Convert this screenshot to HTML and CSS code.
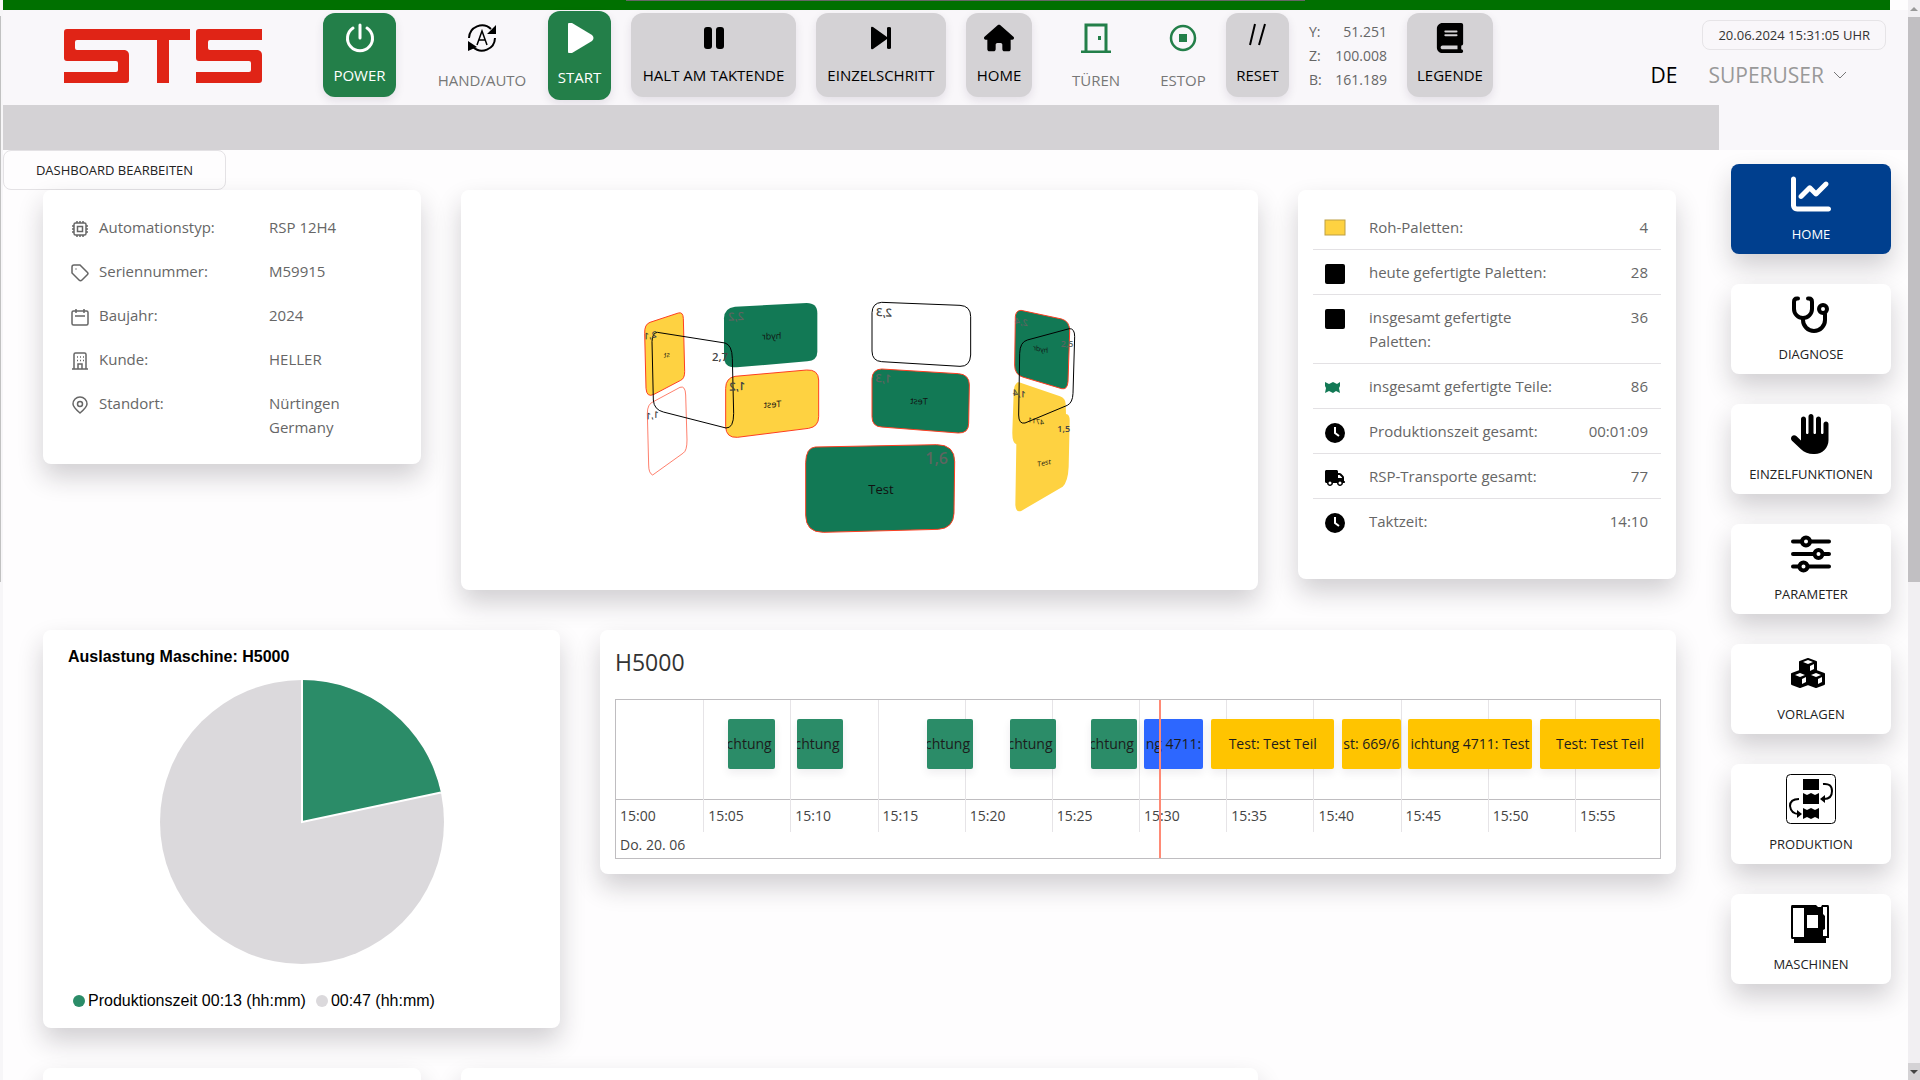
FILE: index.html
```html
<!DOCTYPE html>
<html lang="de">
<head>
<meta charset="utf-8">
<title>STS Dashboard</title>
<link rel="stylesheet" href="styles.css">
</head>
<body>
<div class="edge" aria-hidden="true"></div>
<div class="app">
  <div class="status-bar"><span class="status-line"></span></div>
  <header class="header">
    <svg class="logo" viewBox="0 0 198 54" role="img" aria-label="STS"><g fill="#e02416"><path d="M3 0H126V11H105V54H93V11H13Q11 11 11 13V19Q11 21 13 21H61Q65 22 65 26V51Q65 54 62 54H0V43H52Q54 43 54 41V34Q54 32 52 32H3Q0 32 0 29V3Q0 0 3 0Z"/><path d="M135 0H198V11H146Q144 11 144 13V19Q144 21 146 21H194Q198 22 198 26V51Q198 54 195 54H132V43H185Q187 43 187 41V34Q187 32 185 32H135Q132 32 132 29V3Q132 0 135 0Z"/></g></svg>
    <div class="toolbar">
      <button class="tool tool-on"><svg viewBox="0 0 30 30"><g fill="none" stroke="#fff" stroke-width="3" stroke-linecap="round"><path d="M15 2V15"/><path d="M8 5A12.500 12.500 0 1 0 22 5"/></g></svg><span>POWER</span></button>
      <button class="tool tool-plain"><svg viewBox="0 0 30 30"><g fill="none" stroke="#000" stroke-width="2"><path d="M2 15A13 13 0 0 1 24 6"/><path d="M28 15A13 13 0 0 1 6 24"/><path d="M10 22L15 8L20 22M12 17H18" stroke-width="1.500"/></g><path d="M29 2V11H20ZM1 28V18L10 24Z"/></svg><span>HAND/AUTO</span></button>
      <button class="tool tool-on tool-start"><svg viewBox="0 0 30 30"><path d="M3 2Q3-2 7 0L27 12Q30 15 27 18L7 30Q3 32 3 28Z" fill="#fff"/></svg><span>START</span></button>
      <button class="tool"><svg viewBox="0 0 30 30"><rect x="5" y="4" width="8" height="22" rx="3"/><rect x="17" y="4" width="8" height="22" rx="3"/></svg><span>HALT AM TAKTENDE</span></button>
      <button class="tool"><svg viewBox="0 0 30 30"><path d="M5 5Q5 3 7 4L21 14V5Q21 4 23 4T25 5V25Q25 26 23 26T21 25V16L7 26Q5 27 5 25Z"/></svg><span>EINZELSCHRITT</span></button>
      <button class="tool"><svg viewBox="0 -32 576 576"><path d="M575.8 255.500c0 18-15 32.100-32 32.100h-32l.7 160.200c0 2.700-.2 5.400-.5 8.100V472c0 22.100-17.900 40-40 40H456c-1.100 0-2.200 0-3.300-.1c-1.400 .1-2.800 .1-4.200 .1H416 392c-22.100 0-40-17.900-40-40V448 384c0-17.700-14.300-32-32-32H256c-17.700 0-32 14.300-32 32v64 24c0 22.100-17.900 40-40 40H160 128.100c-1.500 0-3-.1-4.500-.2c-1.200 .1-2.400 .2-3.600 .2H104c-22.100 0-40-17.900-40-40V360c0-.9 0-1.900 .1-2.800V287.600H32c-18 0-32-14-32-32.100c0-9 3-17 10-24L266.400 8c7-7 15-8 22-8s15 2 21 7L564.800 231.500c8 7 12 15 11 24z"/></svg><span>HOME</span></button>
      <button class="tool tool-plain"><svg viewBox="0 0 30 30"><g fill="none" stroke="#237f49" stroke-width="3"><path d="M5 28V2H25V28M0 29H30"/></g><rect x="17" y="13" width="3" height="4" fill="#237f49"/></svg><span>TÜREN</span></button>
      <button class="tool tool-plain"><svg viewBox="0 0 30 30"><circle cx="15" cy="15" r="12" fill="none" stroke="#237f49" stroke-width="2.500"/><rect x="11" y="11" width="8" height="8" fill="#237f49"/></svg><span>ESTOP</span></button>
      <button class="tool"><svg viewBox="0 0 30 30"><path d="M12 1L7 22M22 1L16 22" stroke="#000" stroke-width="2"/></svg><span>RESET</span></button>
      <dl class="axes"><dt>Y:</dt><dd>51.251</dd><dt>Z:</dt><dd>100.008</dd><dt>B:</dt><dd>161.189</dd></dl>
      <button class="tool"><svg viewBox="-32 0 512 512"><path d="M96 0C43 0 0 43 0 96V416c0 53 43 96 96 96H384h32c17.700 0 32-14.300 32-32s-14.300-32-32-32V384c17.700 0 32-14.300 32-32V32c0-17.700-14.300-32-32-32H384 96zm0 384H352v64H96c-17.700 0-32-14.300-32-32s14.300-32 32-32zm32-240c0-8.800 7.200-16 16-16H336c8.800 0 16 7.200 16 16s-7.200 16-16 16H144c-8.800 0-16-7.200-16-16zm16 48H336c8.800 0 16 7.200 16 16s-7.200 16-16 16H144c-8.800 0-16-7.200-16-16s7.200-16 16-16z"/></svg><span>LEGENDE</span></button>
    </div>
    <div class="session">
      <time class="clock">20.06.2024 15:31:05 UHR</time>
      <div class="account">
        <button class="lang">DE</button>
        <button class="user">SUPERUSER <svg viewBox="0 0 14 10" width="14" height="10"><path d="M1 2L7 8L13 2" fill="none" stroke="#777"/></svg></button>
      </div>
    </div>
  </header>
  <div class="message-bar"></div>

  <div class="body">
    <main class="dashboard">
      <button class="edit">DASHBOARD BEARBEITEN</button>
      <div class="row row-three">
        <section class="card info">
          <dl>
            <dt><svg viewBox="0 0 18 18"><rect x="3" y="3" width="12" height="12" rx="1.500"/><rect x="6.500" y="6.500" width="5" height="5"/><path d="M6 3V1M9 3V1M12 3V1M6 17V15M9 17V15M12 17V15M3 6H1M3 9H1M3 12H1M17 6H15M17 9H15M17 12H15"/></svg>Automationstyp:</dt><dd>RSP 12H4</dd>
            <dt><svg viewBox="0 0 18 18"><path d="M1 3Q1 1 3 1H9L16.500 8.500Q17.500 9.500 16.500 10.500L11 16Q9.500 17.500 8 16L1 9Z"/><path d="M5 4.500V5.500"/></svg>Seriennummer:</dt><dd>M59915</dd>
            <dt><svg viewBox="0 0 18 18"><rect x="1" y="3" width="16" height="14" rx="1.500"/><path d="M5 1V5M13 1V5M4 8H14"/></svg>Baujahr:</dt><dd>2024</dd>
            <dt><svg viewBox="0 0 18 18"><path d="M3 17V2.500Q3 1 4.500 1H13.500Q15 1 15 2.500V17M1 17H17M7 17V12H11V17M6 5H7M9 5H10M12 5H13M6 8.500H7M9 8.500H10M12 8.500H13"/></svg>Kunde:</dt><dd>HELLER</dd>
            <dt><svg viewBox="0 0 18 18"><path d="M9 17Q2 11 2 8A7 7 0 0 1 16 8Q16 11 9 17Z"/><circle cx="9" cy="8" r="2.500"/></svg>Standort:</dt><dd>Nürtingen<br>Germany</dd>
          </dl>
        </section>

        <section class="card storage">
          <svg class="carousel" viewBox="0 0 1440 810" role="img" aria-label="Palettenspeicher">
            <g stroke-width="3">
              <path d="M90 127L175 99Q189 95 190 115L194 275Q194 296 182 301L102 343Q80 354 78 325L74 160Q73 133 90 127Z" fill="#fed241" stroke="#fd3f22"/>
              <path d="M100 365L180 322Q196 316 197 345L201 480Q201 512 190 519L98 585Q86 580 86 555L82 400Q82 372 100 365Z" fill="none" stroke="#fd3f22" stroke-width="2"/>
              <path d="M345 80L560 69Q592 69 592 100V215Q592 241 562 244L350 262Q312 264 312 230V115Q312 84 345 80Z" fill="#127955"/>
              <path d="M345 289L560 270Q595 268 596 300V410Q596 440 566 445L352 472Q318 474 317 440V325Q317 294 345 289Z" fill="#fed241" stroke="#fd3f22"/>
              <path d="M785 67L1020 76Q1052 78 1052 110V225Q1050 260 1020 259L785 245Q756 243 756 213V98Q757 69 785 67Z" fill="none" stroke="#000"/>
              <path d="M785 267L1015 281Q1048 283 1048 315L1046 430Q1046 460 1015 459L785 441Q756 440 756 410V296Q757 268 785 267Z" fill="#127955" stroke="#fd3f22"/>
              <path d="M1203 91L1325 117Q1350 124 1349 155L1344 305Q1342 330 1325 326L1208 291Q1184 284 1184 255L1186 110Q1187 92 1203 91Z" fill="#127955" stroke="#fd3f22"/>
              <path d="M1197 307L1320 349Q1337 355 1337 372L1338 402Q1350 403 1349 425L1346 560Q1344 605 1328 620L1205 692Q1188 700 1186 675L1189 493Q1176 488 1177 455L1181 340Q1182 306 1197 307Z" fill="#fed241"/>
              <path d="M586 501L950 494Q1004 494 1004 545L1002 700Q1000 745 955 748L610 757Q557 757 557 705V548Q558 503 586 501Z" fill="#127955" stroke="#fd3f22"/>
              <path d="M112 157L315 189Q336 195 337 235L341 400Q341 445 318 444L130 396Q102 389 100 360L96 185Q97 158 112 157Z" fill="none" stroke="#000"/>
              <path d="M1222 180L1348 146Q1364 145 1364 170L1359 340Q1358 368 1342 376L1215 429Q1196 433 1196 405L1199 220Q1200 186 1222 180Z" fill="none" stroke="#000"/>
            </g>
            <g class="pallet-name">
              <text transform="matrix(-1 .05 0 1 484 176)">hydr</text>
              <text transform="matrix(-1 .05 0 1 484 381)">Test</text>
              <text transform="matrix(-1 -.05 0 1 923 374)">Test</text>
              <text class="small" transform="matrix(-1 -.2 0 1 1284 219)">hydr</text>
              <text class="small" transform="matrix(-1 .2 0 1 149 230)">st</text>
              <text class="small" transform="matrix(-1 -.2 0 1 1272 436)">4711</text>
              <text class="small" transform="matrix(1 -.2 0 1 1252 560)">Test</text>
              <text class="large" x="745" y="643">Test</text>
            </g>
            <g class="pallet-no">
              <text transform="matrix(-1 .04 0 1 372 120)" class="dim">2,2</text>
              <text transform="matrix(-1 .04 0 1 376 330)">1,2</text>
              <text transform="matrix(-1 -.04 0 1 816 110)">2,3</text>
              <text transform="matrix(-1 -.04 0 1 814 308)" class="dim">1,3</text>
              <text transform="matrix(-1 -.2 0 1 1223 139)" class="dim tiny">2,4</text>
              <text transform="matrix(-1 -.2 0 1 1217 354)" class="tiny">1,4</text>
              <text transform="matrix(-1 .2 0 1 110 172)" class="tiny">2,1</text>
              <text transform="matrix(-1 .2 0 1 116 412)" class="tiny">1,1</text>
              <text x="276" y="244">2,7</text>
              <text x="1322" y="202" class="dim tiny">2,5</text>
              <text x="1312" y="455" class="tiny">1,5</text>
              <text x="916" y="552" class="dim large">1,6</text>
            </g>
          </svg>
        </section>

        <section class="card stats">
          <table>
            <tr><td><svg viewBox="0 0 20 20"><rect x="0" y="1" width="20" height="15" fill="#fed241" stroke="#bd9f45"/></svg></td><th scope="row">Roh-Paletten:</th><td>4</td></tr>
            <tr><td><svg viewBox="0 0 20 20"><rect y="0" width="20" height="20" rx="2"/></svg></td><th scope="row">heute gefertigte Paletten:</th><td>28</td></tr>
            <tr><td><svg viewBox="0 0 20 20"><rect y="0" width="20" height="20" rx="2"/></svg></td><th scope="row">insgesamt gefertigte Paletten:</th><td>36</td></tr>
            <tr><td><svg viewBox="0 0 20 20"><path d="M0 4L4 6L8 4L12 6L15 4V8L14 10L15 15L11 13L8 15L4 13L0 15L1 10L0 8Z" fill="#127955"/></svg></td><th scope="row">insgesamt gefertigte Teile:</th><td>86</td></tr>
            <tr><td><svg viewBox="0 0 20 20"><circle cx="10" cy="10" r="10"/><path d="M10 4V10L14 13" fill="none" stroke="#fff" stroke-width="2"/></svg></td><th scope="row">Produktionszeit gesamt:</th><td>00:01:09</td></tr>
            <tr><td><svg viewBox="0 -64 640 640"><path d="M48 0C21.500 0 0 21.500 0 48V368c0 26.500 21.500 48 48 48H64c0 53 43 96 96 96s96-43 96-96H384c0 53 43 96 96 96s96-43 96-96h32c17.700 0 32-14.300 32-32s-14.300-32-32-32V288 256 237.300c0-17-6.700-33.300-18.700-45.300L512 114.700c-12-12-28.300-18.700-45.300-18.700H416V48c0-26.500-21.500-48-48-48H48zM416 160h50.700L544 237.300V256H416V160zM112 416a48 48 0 1 1 96 0 48 48 0 1 1 -96 0zm368-48a48 48 0 1 1 0 96 48 48 0 1 1 0-96z"/></svg></td><th scope="row">RSP-Transporte gesamt:</th><td>77</td></tr>
            <tr><td><svg viewBox="0 0 20 20"><circle cx="10" cy="10" r="10"/><path d="M10 4V10L14 13" fill="none" stroke="#fff" stroke-width="2"/></svg></td><th scope="row">Taktzeit:</th><td>14:10</td></tr>
          </table>
        </section>
      </div>

      <div class="row row-two">
        <section class="card usage">
          <h2>Auslastung Maschine: H5000</h2>
          <svg class="pie" viewBox="-142 -142 284 284" role="img" aria-label="Auslastung"><circle r="142" fill="#dbd9dc"/><path d="M0 0V-142A142 142 0 0 1 138.900 -29.500Z" fill="#2b8c68"/><path d="M0 -142V0L138.900 -29.500" fill="none" stroke="#fff" stroke-width="2"/></svg>
          <ul><li class="busy">Produktionszeit 00:13 (hh:mm)</li><li class="idle">00:47 (hh:mm)</li></ul>
        </section>
        <section class="card plan">
          <h2>H5000</h2>
          <div class="timeline">
            <div class="ticks"><span>15:00</span><span>15:05</span><span>15:10</span><span>15:15</span><span>15:20</span><span>15:25</span><span>15:30</span><span>15:35</span><span>15:40</span><span>15:45</span><span>15:50</span><span>15:55</span></div>
            <div class="date">Do. 20. 06</div>
            <div class="job done" style="left:10.7%;width:4.5%">chtung</div>
            <div class="job done" style="left:17.3%;width:4.4%">chtung</div>
            <div class="job done" style="left:29.8%;width:4.4%">chtung</div>
            <div class="job done" style="left:37.7%;width:4.4%">chtung</div>
            <div class="job done" style="left:45.5%;width:4.4%">chtung</div>
            <div class="job active" style="left:50.6%;width:5.6%">ng 4711:</div>
            <div class="job" style="left:57%;width:11.8%">Test: Test Teil</div>
            <div class="job" style="left:69.5%;width:5.7%">st: 669/6</div>
            <div class="job" style="left:75.9%;width:11.8%">ichtung 4711: Test</div>
            <div class="job" style="left:88.5%;width:11.5%">Test: Test Teil</div>
            <div class="now" style="left:52%"></div>
          </div>
        </section>
      </div>

      <div class="row row-three"><section class="card"></section><section class="card"></section></div>
    </main>

    <nav class="side">
      <a class="current" href="#home"><svg viewBox="0 0 512 512"><path fill="#fff" d="M64 64c0-17.700-14.300-32-32-32S0 46.300 0 64V400c0 44.200 35.800 80 80 80H480c17.700 0 32-14.300 32-32s-14.300-32-32-32H80c-8.800 0-16-7.200-16-16V64zm406.600 86.600c12.500-12.500 12.500-32.800 0-45.300s-32.800-12.500-45.300 0L320 210.700l-57.400-57.400c-12.500-12.500-32.800-12.500-45.300 0l-112 112c-12.500 12.500-12.500 32.800 0 45.300s32.800 12.500 45.300 0L240 221.300l57.400 57.400c12.500 12.500 32.800 12.500 45.300 0l128-128z"/></svg>HOME</a>
      <a href="#diagnose"><svg viewBox="0 0 40 40"><g fill="none" stroke="#000" stroke-width="4" stroke-linecap="round"><path d="M7 4.500H6Q3 4.500 3 8V15A9 9 0 0 0 21 15V8Q21 4.500 18 4.500H17"/><path d="M12 24V26A10 10 0 0 0 34 26V20"/><circle cx="32" cy="15" r="4"/></g></svg>DIAGNOSE</a>
      <a href="#einzelfunktionen"><svg viewBox="0 0 512 512"><path d="M288 32c0-17.700-14.300-32-32-32s-32 14.300-32 32V240c0 8.800-7.200 16-16 16s-16-7.200-16-16V64c0-17.700-14.300-32-32-32s-32 14.300-32 32V336c0 1.500 0 3.100 .1 4.600L67.600 283c-16-15.200-41.300-14.600-56.600 1.400s-14.600 41.300 1.400 56.600L124.800 448c43.100 41.100 100.400 64 160 64H304c97.200 0 176-78.800 176-176V128c0-17.700-14.300-32-32-32s-32 14.300-32 32V240c0 8.800-7.200 16-16 16s-16-7.200-16-16V64c0-17.700-14.300-32-32-32s-32 14.300-32 32V240c0 8.800-7.200 16-16 16s-16-7.200-16-16V32z"/></svg>EINZELFUNKTIONEN</a>
      <a href="#parameter"><svg viewBox="0 0 40 40"><g fill="#fff" stroke="#000" stroke-width="4" stroke-linecap="round"><path d="M2 7.500H38M2 20H38M2 32.500H38"/><circle cx="15" cy="7.500" r="4"/><circle cx="27.500" cy="20" r="4"/><circle cx="12.500" cy="32.500" r="4"/></g></svg>PARAMETER</a>
      <a href="#vorlagen"><svg viewBox="0 0 40 40"><g stroke="#000" stroke-width="2" stroke-linejoin="round"><path d="M17 5L25 8V17L17 20L9 17V8Z"/><path d="M9 17L17 20V30L9 33L1 30V20Z"/><path d="M25 17L33 20V30L25 33L17 30V20Z"/></g><path fill="#fff" d="M17 6L22 8L17 10L12 8ZM19 12L23 10V15L19 17ZM9 19L14 21L9 23L4 21ZM11 25L15 23V28L11 30ZM25 19L30 21L25 23L20 21ZM27 25L31 23V28L27 30Z"/></svg>VORLAGEN</a>
      <a class="tall" href="#produktion"><svg viewBox="0 0 50 50"><rect x=".5" y=".5" width="49" height="49" rx="4" fill="none" stroke="#000"/><path d="M17 5H33V16H17ZM17 19L21 21L25 19L29 21L33 19V30H17ZM17 34L21 36L25 34L29 36L33 34V45L29 43L25 45L21 43L17 45Z"/><g fill="none" stroke="#000" stroke-width="2"><path d="M37 10Q46 9 46 17Q46 25 38 25"/><path d="M13 25Q4 25 4 32Q5 40 13 40"/></g><path d="M34 25L39 21V29ZM16 40L11 36V44Z"/></svg>PRODUKTION</a>
      <a href="#maschinen"><svg viewBox="0 0 40 40"><path d="M1 1H25L27 3H30L31 1H37Q38 1 38 3V34H35V39H3V35H1Q0 35 0 33V3Q0 1 1 1Z"/><path fill="#fff" d="M2 4H13V33H2ZM16 11H27V24H16ZM32 3H36V32H32V26L34 25V12L32 10Z"/></svg>MASCHINEN</a>
    </nav>
  </div>
</div>
<div class="scroll" aria-hidden="true"><span class="up"></span><span class="thumb"></span><span class="track"></span><span class="down"></span></div>
</body>
</html>
```
FILE: styles.css
```css
* { box-sizing: border-box; }
body {
  margin: 0;
  height: 100vh;
  overflow: hidden;
  display: flex;
  background: #fefdfe;
  color: #222;
  font: 14px/24px "Open Sans", "Noto Sans", sans-serif;
}
button { font: inherit; color: inherit; border: 0; background: none; padding: 0; cursor: pointer; }
dl, dd, ul, h2 { margin: 0; padding: 0; }
svg { display: block; flex: none; }

.edge { width: 3px; background: linear-gradient(#c1c1c1, #c1c1c1) 0 16px / 1px 566px no-repeat #f7f6f8; }
.app { flex: 1; min-width: 0; display: flex; flex-direction: column; }

.status-bar { height: 10px; flex: none; margin-right: 18px; background: #007000; }
.status-line { display: block; width: 36%; height: 1px; margin-left: 33%; background: #666; }

.header { display: flex; flex: none; align-items: flex-start; height: 95px; padding: 1px 22px 0 61px; background: #f9f7fa; }
.logo { width: 198px; height: 54px; margin: 18px 61px 0 0; }
.toolbar {
  display: grid;
  grid-template-columns: 73px 112px 63px 165px 130px 66px 68px 66px 63px 78px 86px;
  gap: 20px;
  align-items: start;
  font-size: 15px;
}
.tool {
  display: flex;
  flex-direction: column;
  align-items: center;
  gap: 10px;
  height: 84px;
  margin-top: 2px;
  padding-top: 10px;
  border-radius: 12px;
  background: #d4d2d5;
  box-shadow: 0 4px 10px rgba(40, 20, 60, .1);
  color: #000;
  white-space: nowrap;
}
.tool svg { width: 30px; height: 30px; }
.tool-on { background: #237f49; color: #fff; }
.tool-start { height: 89px; margin-top: 0; padding-top: 12px; gap: 12px; }
.tool-plain { gap: 15px; padding-left: 20px; background: none; box-shadow: none; color: #777; }
.axes { display: grid; grid-template-columns: auto 1fr; padding-top: 9px; font-size: 14px; color: #666; }
.axes dd { text-align: right; }

.session { margin-left: auto; display: flex; flex-direction: column; align-items: flex-end; }
.clock { margin-top: 9px; padding: 2px 15px; border: 1px solid #e6e4e7; border-radius: 8px; font-size: 13px; color: #333; }
.account { display: flex; gap: 31px; margin: 13px 39px 0 0; font-size: 21px; }
.lang { color: #000; }
.user { display: flex; align-items: center; gap: 9px; color: #999; }

.message-bar { flex: none; height: 45px; border-right: 189px solid #f9f7fa; background: #d4d2d5; }

.body { display: flex; flex: 1; min-height: 0; }
.dashboard { flex: 1; min-width: 0; }
.edit { display: block; width: 223px; height: 40px; border: 1px solid #e4e2e5; border-radius: 8px; font-size: 13px; color: #222; }
.row { display: grid; gap: 40px; align-items: start; margin: 0 0 40px 40px; }
.row-three { grid-template-columns: 378fr 797fr 378fr; }
.row-two { grid-template-columns: 517fr 1076fr; }
.card { min-height: 240px; border-radius: 8px; background: #fff; box-shadow: 0 13px 26px rgba(30, 25, 35, .2); }

.info { min-height: 274px; padding: 25px 28px; font-size: 15px; color: #666; }
.info dl { display: grid; grid-template-columns: 198px 1fr; row-gap: 20px; }
.info dt { display: flex; gap: 10px; }
.info dt svg { width: 18px; height: 18px; margin-top: 5px; fill: none; stroke: #666; stroke-width: 1.5; }

.storage { min-height: 400px; padding-top: 90px; }
.carousel { width: 480px; height: 270px; margin: 0 auto; }
.pallet-name { font-size: 27px; fill: #111; }
.pallet-name .small { font-size: 21px; }
.pallet-name .large { font-size: 39px; }
.pallet-no { font-size: 34px; font-weight: 600; fill: #444; }
.pallet-no .dim { fill: #5d6560; }
.pallet-no .tiny { font-size: 27px; }
.pallet-no .large { font-size: 48px; }

.stats { min-height: 389px; padding: 15px; font-size: 15px; color: #666; }
.stats table { width: 100%; border-collapse: collapse; }
.stats td, .stats th { padding: 10px 0; border-bottom: 1px solid #e3e1e4; vertical-align: top; font-weight: 400; text-align: left; }
.stats tr:last-child > * { border: 0; }
.stats td:first-child { width: 56px; padding-left: 12px; }
.stats td svg { width: 20px; height: 20px; margin-top: 4px; overflow: visible; }
.stats td:last-child { width: 100px; padding-right: 13px; text-align: right; }

.usage { min-height: 398px; padding: 15px 25px 15px; font-family: "Liberation Sans", Arial, sans-serif; font-size: 16px; color: #000; }
.usage h2 { font-size: 16px; }
.pie { width: 284px; height: 284px; margin: 11px auto 25px; }
.usage ul { display: flex; gap: 10px; padding-left: 5px; list-style: none; white-space: nowrap; }
.usage li { display: flex; align-items: center; gap: 3px; }
.usage li::before { content: ""; width: 12px; height: 12px; border-radius: 50%; }
.busy::before { background: #2b8c68; }
.idle::before { background: #dbd9dc; }

.plan { min-height: 244px; padding: 16px 15px 15px; }
.plan h2 { margin-bottom: 21px; font-size: 23px; line-height: 32px; font-weight: 400; color: #333; }
.timeline { position: relative; height: 160px; border: 1px solid #bfbdc0; overflow: hidden; color: #444; }
.ticks { display: flex; height: 132px; background: linear-gradient(#bfbdc0, #bfbdc0) 0 99px / 100% 1px no-repeat; }
.ticks span { flex: 0 0 8.35%; padding: 104px 0 0 4px; }
.ticks span + span { border-left: 1px solid #e6e4e7; }
.date { padding-left: 4px; line-height: 26px; }
.job {
  position: absolute;
  top: 19px;
  height: 50px;
  display: flex;
  align-items: center;
  justify-content: center;
  overflow: hidden;
  border-radius: 2px;
  background: #ffc400;
  box-shadow: 0 4px 8px rgba(40, 25, 50, .08);
  color: #1c1c1c;
  white-space: nowrap;
}
.done { justify-content: flex-end; padding-right: 3px; background: #2b8c68; }
.active { background: #2d67ff; }
.now { position: absolute; top: 0; bottom: 0; width: 2px; background: #ff8a75; }

.side { flex: none; display: flex; flex-direction: column; gap: 30px; width: 160px; margin: 14px 17px 0 55px; }
.side a {
  display: flex;
  flex-direction: column;
  align-items: center;
  gap: 10px;
  height: 90px;
  padding-top: 10px;
  border-radius: 8px;
  background: #fff;
  box-shadow: 0 13px 26px rgba(30, 25, 35, .2);
  color: #222;
  font-size: 13px;
  line-height: 20px;
  text-decoration: none;
}
.side svg { width: 40px; height: 40px; }
.side .current { background: #003f8e; color: #fff; }
.side .tall { height: 100px; }
.side .tall svg { width: 50px; height: 50px; }

.scroll { width: 12px; display: flex; flex-direction: column; background: #f1eff2; }
.scroll .up, .scroll .down { height: 17px; display: flex; align-items: center; justify-content: center; }
.scroll .down { background: #d4d2d5; }
.scroll .up::before, .scroll .down::before { content: ""; border: 4px solid transparent; }
.scroll .up::before { border-top: 0; border-bottom-color: #999; }
.scroll .down::before { border-bottom: 0; border-top-color: #444; }
.scroll .thumb { flex: 565; background: #c1bfc2; }
.scroll .track { flex: 481; }
```
